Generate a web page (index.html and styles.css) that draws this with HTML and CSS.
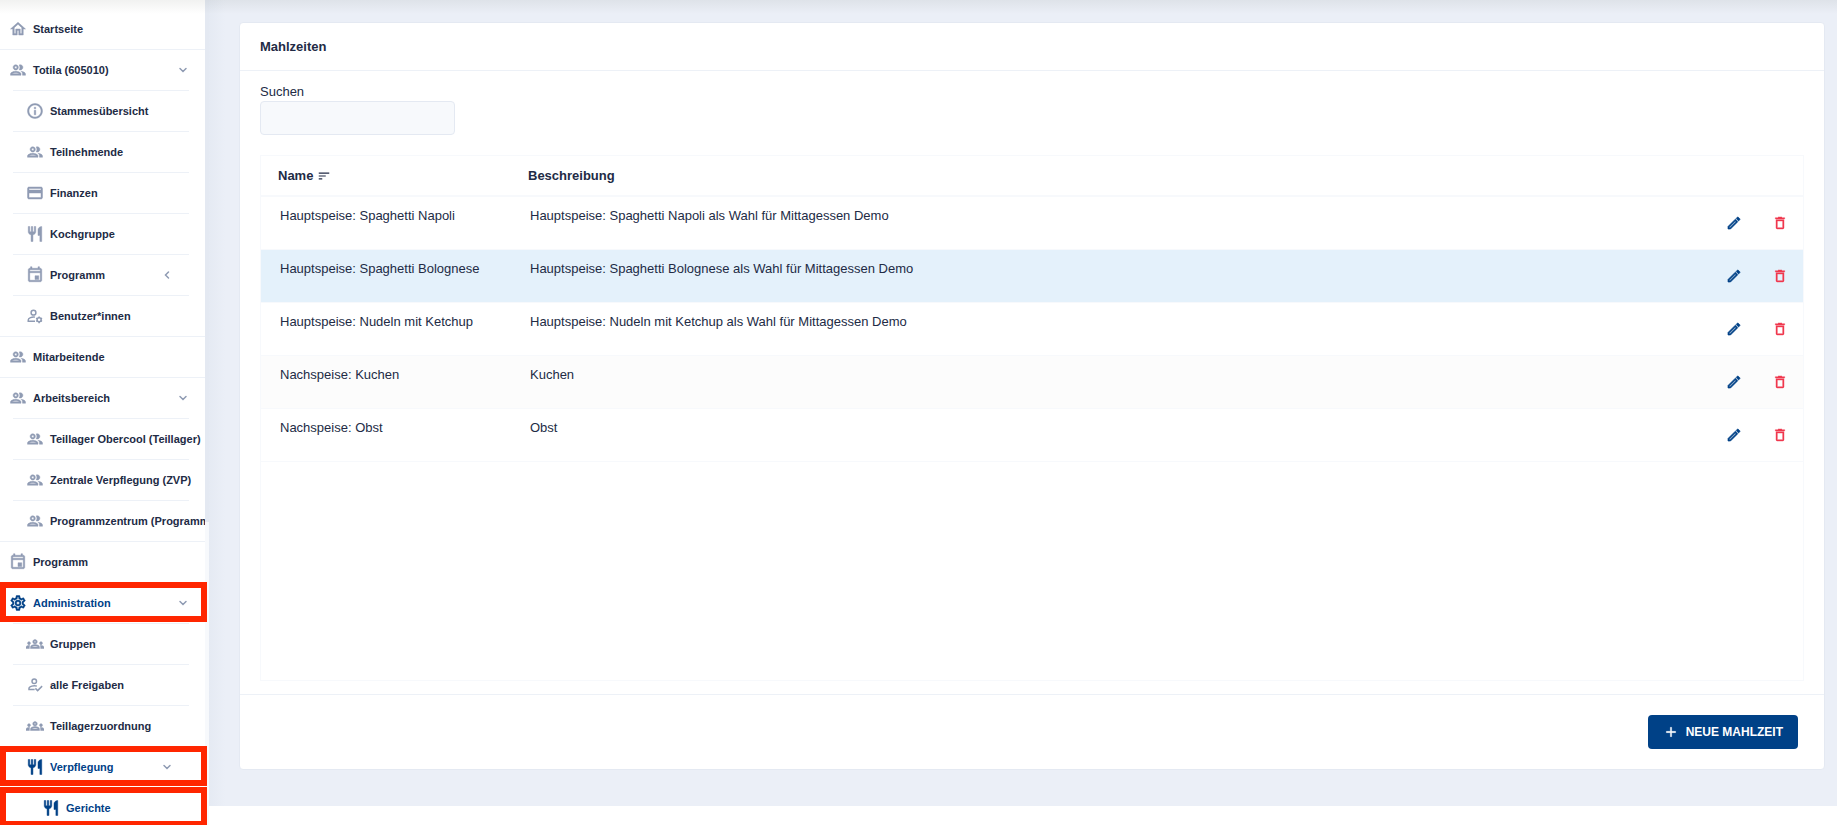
FILE: index.html
```
<!DOCTYPE html>
<html lang="de">
<head>
<meta charset="utf-8">
<title>Mahlzeiten</title>
<link rel="stylesheet" href="styles.css">
</head>
<body>
<svg class="sprite" aria-hidden="true">
  <symbol id="home" viewBox="0 0 24 24"><path d="M12 5.7l5 4.5V18h-2v-6H9v6H7v-7.8l5-4.5M12 3L2 12h3v8h6v-6h2v6h6v-8h3L12 3z"/></symbol>
  <symbol id="people" viewBox="0 0 24 24"><path d="M9 13.75c-2.34 0-7 1.17-7 3.5V19h14v-1.75c0-2.33-4.66-3.5-7-3.5zM4.34 17c.84-.58 2.87-1.25 4.66-1.25s3.82.67 4.66 1.25H4.34zM9 12c1.93 0 3.5-1.57 3.5-3.5S10.93 5 9 5 5.5 6.57 5.5 8.5 7.07 12 9 12zm0-5c.83 0 1.5.67 1.5 1.5S9.83 10 9 10s-1.5-.67-1.5-1.5S8.17 7 9 7zm7.04 6.81c1.16.84 1.96 1.96 1.96 3.44V19h4v-1.75c0-2.02-3.5-3.17-5.96-3.44zM15 12c1.93 0 3.5-1.57 3.5-3.5S16.93 5 15 5c-.54 0-1.04.13-1.5.35.63.89 1 1.98 1 3.15s-.37 2.26-1 3.15c.46.22.96.35 1.5.35z"/></symbol>
  <symbol id="info" viewBox="0 0 24 24"><path d="M11 7h2v2h-2zm0 4h2v6h-2zm1-9C6.48 2 2 6.48 2 12s4.48 10 10 10 10-4.48 10-10S17.52 2 12 2zm0 18c-4.41 0-8-3.59-8-8s3.59-8 8-8 8 3.59 8 8-3.59 8-8 8z"/></symbol>
  <symbol id="card" viewBox="0 0 24 24"><path d="M20 4H4c-1.11 0-1.99.89-1.99 2L2 18c0 1.11.89 2 2 2h16c1.11 0 2-.89 2-2V6c0-1.11-.89-2-2-2zm0 14H4v-6h16v6zm0-10H4V6h16v2z"/></symbol>
  <symbol id="food" viewBox="0 0 24 24"><path d="M11 9H9V2H7v7H5V2H3v7c0 2.12 1.66 3.84 3.75 3.97V22h2.5v-9.03C11.34 12.84 13 11.12 13 9V2h-2v7zm5-3v8h2.5v8H21V2c-2.76 0-5 2.24-5 4z"/></symbol>
  <symbol id="event" viewBox="0 0 24 24"><path d="M12 13h5v5h-5zM19 3h-1V1h-2v2H8V1H6v2H5c-1.110 0-2 .9-2 2v14c0 1.100.89 2 2 2h14c1.100 0 2-.9 2-2V5c0-1.100-.9-2-2-2zm0 16H5V9h14v10zm0-12H5V5h14v2z"/></symbol>
  <symbol id="usercog" viewBox="0 0 24 24"><g fill="none" stroke="currentColor" stroke-width="2"><circle cx="10" cy="7.500" r="3.200"/><path d="M12 13.500c-4-.7-9 1.300-9 3.700V19h9"/><circle cx="17.500" cy="17" r="2.700"/><path d="M17.500 12.500v2M17.500 19.500v2M13.600 14.800l1.800 1M19.600 18.200l1.800 1M13.600 19.200l1.800-1M19.600 15.800l1.800-1"/></g></symbol>
  <symbol id="cog" viewBox="0 0 24 24"><path d="M12 8a4 4 0 0 1 4 4 4 4 0 0 1-4 4 4 4 0 0 1-4-4 4 4 0 0 1 4-4m0 2a2 2 0 0 0-2 2 2 2 0 0 0 2 2 2 2 0 0 0 2-2 2 2 0 0 0-2-2m-2 12c-.25 0-.46-.18-.5-.42l-.37-2.65c-.63-.25-1.17-.59-1.69-.99l-2.49 1.01c-.22.08-.49 0-.61-.22l-2-3.46a.493.493 0 0 1 .12-.64l2.11-1.66L4.5 12l.07-1-2.11-1.63a.493.493 0 0 1-.12-.64l2-3.46c.12-.22.39-.31.61-.22l2.49 1c.52-.39 1.06-.73 1.69-.98l.37-2.65c.04-.24.25-.42.5-.42h4c.25 0 .46.18.5.42l.37 2.65c.63.25 1.17.59 1.69.98l2.49-1c.22-.09.49 0 .61.22l2 3.46c.13.22.07.49-.12.64L19.43 11l.07 1-.07 1 2.11 1.63c.19.15.25.42.12.64l-2 3.46c-.12.22-.39.31-.61.22l-2.49-1c-.52.39-1.06.73-1.69.98l-.37 2.65c-.04.24-.25.42-.5.42h-4m1.25-18l-.37 2.61c-1.2.25-2.26.89-3.03 1.78L5.44 7.35l-.75 1.3L6.8 10.2a5.55 5.55 0 0 0 0 3.6l-2.12 1.56.75 1.3 2.43-1.04c.77.88 1.82 1.52 3.01 1.76l.37 2.62h1.52l.37-2.61c1.19-.25 2.24-.89 3.01-1.77l2.43 1.04.75-1.3-2.12-1.55c.4-1.17.4-2.44 0-3.61l2.11-1.55-.75-1.3-2.41 1.04a5.42 5.42 0 0 0-3.03-1.77L12.75 4h-1.5z"/></symbol>
  <symbol id="groups" viewBox="0 0 24 24"><path d="M4 13c1.1 0 2-.9 2-2s-.9-2-2-2-2 .9-2 2 .9 2 2 2zm1.13 1.1C4.76 14.04 4.39 14 4 14c-.99 0-1.93.21-2.78.58C.48 14.9 0 15.62 0 16.43V18h4.5v-1.61c0-.83.23-1.61.63-2.29zM20 13c1.1 0 2-.9 2-2s-.9-2-2-2-2 .9-2 2 .9 2 2 2zm4 3.43c0-.81-.48-1.53-1.22-1.85C21.93 14.21 20.99 14 20 14c-.39 0-.76.04-1.13.1.4.68.63 1.46.63 2.29V18H24v-1.57zm-7.76-2.78C15.07 13.13 13.63 12.75 12 12.75s-3.07.39-4.24.9C6.68 14.13 6 15.21 6 16.39V18h12v-1.61c0-1.18-.68-2.26-1.76-2.74zM8.07 16c.09-.23.13-.39.91-.69.97-.38 1.99-.56 3.02-.56s2.05.18 3.02.56c.77.3.81.46.91.69H8.07zM12 8c.55 0 1 .45 1 1s-.45 1-1 1-1-.45-1-1 .45-1 1-1m0-2c-1.66 0-3 1.34-3 3s1.34 3 3 3 3-1.34 3-3-1.34-3-3-3z"/></symbol>
  <symbol id="usercheck" viewBox="0 0 24 24"><g fill="none" stroke="currentColor" stroke-width="2"><circle cx="11" cy="7" r="3"/><path d="M14.500 13.500c-4-1.500-10.500.5-10.500 2.800V18h7.500M12.500 16.500l3 3 6-6"/></g></symbol>
  <symbol id="down" viewBox="0 0 12 12"><path d="M3 4.500l3 3 3-3" fill="none" stroke="currentColor" stroke-width="1.500" stroke-linecap="round"/></symbol>
  <symbol id="left" viewBox="0 0 12 12"><path d="M7.500 3l-3 3 3 3" fill="none" stroke="currentColor" stroke-width="1.500" stroke-linecap="round"/></symbol>
  <symbol id="sort" viewBox="0 0 24 24"><path d="M3 18h6v-2H3v2zM3 6v2h18V6H3zm0 7h12v-2H3v2z"/></symbol>
  <symbol id="edit" viewBox="0 0 24 24"><path d="M14.06 9.02l.92.92L5.92 19H5v-.92l9.06-9.06M17.66 3c-.25 0-.51.1-.7.29l-1.83 1.83 3.75 3.75 1.83-1.83c.39-.39.39-1.02 0-1.41l-2.34-2.34c-.2-.2-.45-.29-.71-.29zm-3.6 3.19L3 17.25V21h3.75L17.81 9.94l-3.75-3.75z" stroke="currentColor"/></symbol>
  <symbol id="trash" viewBox="0 0 24 24"><path d="M6 19c0 1.1.9 2 2 2h8c1.1 0 2-.9 2-2V7H6v12zM8 9h8v10H8V9zm7.5-5l-1-1h-5l-1 1H5v2h14V4h-3.5z" stroke="currentColor" stroke-width=".6"/></symbol>
  <symbol id="plus" viewBox="0 0 24 24"><path d="M19 13h-6v6h-2v-6H5v-2h6V5h2v6h6z" stroke="currentColor" stroke-width=".5"/></symbol>
</svg>
<div class="layout">
  <nav class="sidebar" aria-label="Hauptmenü">
    <ul class="menu">
      <li><a class="item" href="#"><svg class="icon"><use href="#home"/></svg>Startseite</a></li>
      <li>
        <button class="item" type="button" aria-expanded="true"><svg class="icon"><use href="#people"/></svg>Totila (605010)<svg class="chevron"><use href="#down"/></svg></button>
        <ul class="submenu">
          <li><a class="item" href="#"><svg class="icon"><use href="#info"/></svg>Stammesübersicht</a></li>
          <li><a class="item" href="#"><svg class="icon"><use href="#people"/></svg>Teilnehmende</a></li>
          <li><a class="item" href="#"><svg class="icon"><use href="#card"/></svg>Finanzen</a></li>
          <li><a class="item" href="#"><svg class="icon"><use href="#food"/></svg>Kochgruppe</a></li>
          <li><button class="item" type="button" aria-expanded="false"><svg class="icon"><use href="#event"/></svg>Programm<svg class="chevron"><use href="#left"/></svg></button></li>
          <li><a class="item" href="#"><svg class="icon"><use href="#usercog"/></svg>Benutzer*innen</a></li>
        </ul>
      </li>
      <li><a class="item" href="#"><svg class="icon"><use href="#people"/></svg>Mitarbeitende</a></li>
      <li>
        <button class="item" type="button" aria-expanded="true"><svg class="icon"><use href="#people"/></svg>Arbeitsbereich<svg class="chevron"><use href="#down"/></svg></button>
        <ul class="submenu">
          <li><a class="item" href="#"><svg class="icon"><use href="#people"/></svg>Teillager Obercool (Teillager)</a></li>
          <li><a class="item" href="#"><svg class="icon"><use href="#people"/></svg>Zentrale Verpflegung (ZVP)</a></li>
          <li><a class="item" href="#"><svg class="icon"><use href="#people"/></svg>Programmzentrum (Programm</a></li>
        </ul>
      </li>
      <li><a class="item" href="#"><svg class="icon"><use href="#event"/></svg>Programm</a></li>
      <li class="marked">
        <button class="item active" type="button" aria-expanded="true"><svg class="icon"><use href="#cog"/></svg>Administration<svg class="chevron"><use href="#down"/></svg></button>
        <ul class="submenu">
          <li><a class="item" href="#"><svg class="icon"><use href="#groups"/></svg>Gruppen</a></li>
          <li><a class="item" href="#"><svg class="icon"><use href="#usercheck"/></svg>alle Freigaben</a></li>
          <li><a class="item" href="#"><svg class="icon"><use href="#groups"/></svg>Teillagerzuordnung</a></li>
          <li class="marked">
            <button class="item active" type="button" aria-expanded="true"><svg class="icon"><use href="#food"/></svg>Verpflegung<svg class="chevron"><use href="#down"/></svg></button>
            <ul class="submenu">
              <li class="marked"><a class="item active" href="#"><svg class="icon"><use href="#food"/></svg>Gerichte</a></li>
            </ul>
          </li>
        </ul>
      </li>
    </ul>
    <div class="scrollbar"><div class="thumb"></div></div>
  </nav>
  <main class="content">
    <section class="panel">
      <h1 class="panel-header">Mahlzeiten</h1>
      <div class="panel-body">
        <label class="search-label" for="search">Suchen</label>
        <input class="search" id="search" type="text">
        <div class="grid">
          <table class="meals">
            <thead>
              <tr><th class="col-name"><span class="sorted">Name <svg class="sort"><use href="#sort"/></svg></span></th><th>Beschreibung</th><th class="col-actions"></th></tr>
            </thead>
            <tbody>
              <tr><td>Hauptspeise: Spaghetti Napoli</td><td>Hauptspeise: Spaghetti Napoli als Wahl für Mittagessen Demo</td><td><div class="actions"><button class="edit" type="button" aria-label="Bearbeiten"><svg><use href="#edit"/></svg></button><button class="delete" type="button" aria-label="Löschen"><svg><use href="#trash"/></svg></button></div></td></tr>
              <tr class="hovered"><td>Hauptspeise: Spaghetti Bolognese</td><td>Hauptspeise: Spaghetti Bolognese als Wahl für Mittagessen Demo</td><td><div class="actions"><button class="edit" type="button" aria-label="Bearbeiten"><svg><use href="#edit"/></svg></button><button class="delete" type="button" aria-label="Löschen"><svg><use href="#trash"/></svg></button></div></td></tr>
              <tr><td>Hauptspeise: Nudeln mit Ketchup</td><td>Hauptspeise: Nudeln mit Ketchup als Wahl für Mittagessen Demo</td><td><div class="actions"><button class="edit" type="button" aria-label="Bearbeiten"><svg><use href="#edit"/></svg></button><button class="delete" type="button" aria-label="Löschen"><svg><use href="#trash"/></svg></button></div></td></tr>
              <tr class="striped"><td>Nachspeise: Kuchen</td><td>Kuchen</td><td><div class="actions"><button class="edit" type="button" aria-label="Bearbeiten"><svg><use href="#edit"/></svg></button><button class="delete" type="button" aria-label="Löschen"><svg><use href="#trash"/></svg></button></div></td></tr>
              <tr><td>Nachspeise: Obst</td><td>Obst</td><td><div class="actions"><button class="edit" type="button" aria-label="Bearbeiten"><svg><use href="#edit"/></svg></button><button class="delete" type="button" aria-label="Löschen"><svg><use href="#trash"/></svg></button></div></td></tr>
            </tbody>
          </table>
        </div>
      </div>
      <footer class="panel-footer">
        <button class="primary" type="button"><svg><use href="#plus"/></svg>NEUE MAHLZEIT</button>
      </footer>
    </section>
  </main>
</div>
</body>
</html>
```
FILE: styles.css
```
*, *::before { box-sizing: border-box; }
body {
  margin: 0;
  background: #fff;
  color: #222b45;
  font: 13px/20px "Liberation Sans", Arial, sans-serif;
}
ul { list-style: none; margin: 0; padding: 0; }
button { font: inherit; color: inherit; background: none; border: 0; padding: 0; }
svg { fill: currentColor; flex: none; }
.sprite { display: none; }

.layout {
  display: flex;
  height: 100vh;
  overflow: hidden;
  position: relative;
}
/* Shadow cast by the app header above the page */
.layout::before {
  content: "";
  position: absolute;
  inset: 0 0 auto;
  height: 14px;
  background: linear-gradient(rgba(20, 30, 10, 0.06), rgba(20, 30, 10, 0));
  z-index: 1;
  pointer-events: none;
}

.sidebar { display: flex; flex: none; width: 209px; overflow: hidden; }
.menu { flex: 1; min-width: 0; padding-top: 8px; }
.menu li { position: relative; border-top: 1px solid #edf1f7; }
.menu > li:first-child { border-top: 0; }
.submenu { margin: 0 16px 0 13px; }
.submenu .submenu { margin: 0; }
.item {
  display: flex;
  align-items: center;
  gap: 6px;
  width: 100%;
  height: 40px;
  padding: 0 16px 0 9px;
  color: #222b45;
  font-size: 11px;
  font-weight: bold;
  text-decoration: none;
  white-space: nowrap;
  overflow: hidden;
}
.menu > li:first-child .item { height: 41px; }
.submenu .item { width: calc(100% + 16px); padding: 0 32px 0 13px; }
.submenu .submenu .item { padding-left: 29px; }
.item.active { color: #004187; }
.icon { width: 18px; height: 18px; color: #8f9bb3; stroke: currentColor; stroke-width: 0.6px; }
.active .icon { color: #004187; }
.chevron { width: 12px; height: 12px; margin-left: auto; color: #8f9bb3; }

/* Red frame that points out a menu entry */
.marked::before {
  content: "";
  position: absolute;
  top: -1px;
  left: 0;
  right: -2px;
  height: 40px;
  border: 6px solid #ff2600;
  pointer-events: none;
  z-index: 1;
}
.submenu .marked::before { left: -13px; right: -18px; }

.scrollbar { flex: none; width: 4px; background: #f7f9fc; }
.thumb { height: 63.3%; background: #e4e9f2; }

.content {
  flex: 1;
  min-width: 0;
  display: flex;
  margin-bottom: 19px;
  padding: 22px 12px 36px 30px;
  background: linear-gradient(90deg, #e5eaf3, #ebeff7 16px);
}
.panel {
  flex: 1;
  min-width: 0;
  display: flex;
  flex-direction: column;
  background: #fff;
  border: 1px solid #e4e9f2;
  border-radius: 4px;
}
.panel-header {
  margin: 0;
  padding: 14px 20px 13px;
  border-bottom: 1px solid #edf1f7;
  font-size: 13px;
  line-height: 20px;
}
.panel-body {
  flex: 1;
  display: flex;
  flex-direction: column;
  align-items: flex-start;
  padding: 11px 20px 13px;
}
.search-label { height: 19px; }
.search {
  width: 195px;
  height: 34px;
  margin-bottom: 20px;
  padding: 0 12px;
  font: inherit;
  background: #f7f9fc;
  border: 1px solid #e4e9f2;
  border-radius: 4px;
}
.grid { flex: 1; align-self: stretch; border: 1px solid #f7f9fc; }
.meals { width: 100%; border-collapse: separate; border-spacing: 0; table-layout: fixed; }
.meals th {
  height: 41px;
  padding: 0 17px;
  text-align: left;
  border-bottom: 2px solid #f7f9fc;
}
.meals td {
  height: 53px;
  padding: 9px 19px;
  vertical-align: top;
  border-bottom: 1px solid #f7f9fc;
}
.meals .col-name { width: 250px; }
.meals .col-actions { width: 108px; }
.meals td:last-child { padding: 0; vertical-align: middle; }
.sorted { display: flex; align-items: center; gap: 4px; }
.sort { width: 14px; height: 14px; }
.hovered { background: #e4f1fb; }
.striped { background: #fcfcfc; }
.actions { display: flex; justify-content: flex-end; gap: 30px; padding-right: 15px; }
.actions svg { display: block; width: 16px; height: 16px; }
.edit { color: #004187; }
.delete { color: #f0384f; }

.panel-footer {
  display: flex;
  justify-content: flex-end;
  padding: 20px 26px;
  border-top: 1px solid #edf1f7;
}
.primary {
  display: flex;
  align-items: center;
  gap: 7px;
  height: 34px;
  padding: 0 15px;
  background: #004187;
  border-radius: 4px;
  color: #fff;
  font-size: 12px;
  font-weight: bold;
}
.primary svg { width: 16px; height: 16px; }
```
